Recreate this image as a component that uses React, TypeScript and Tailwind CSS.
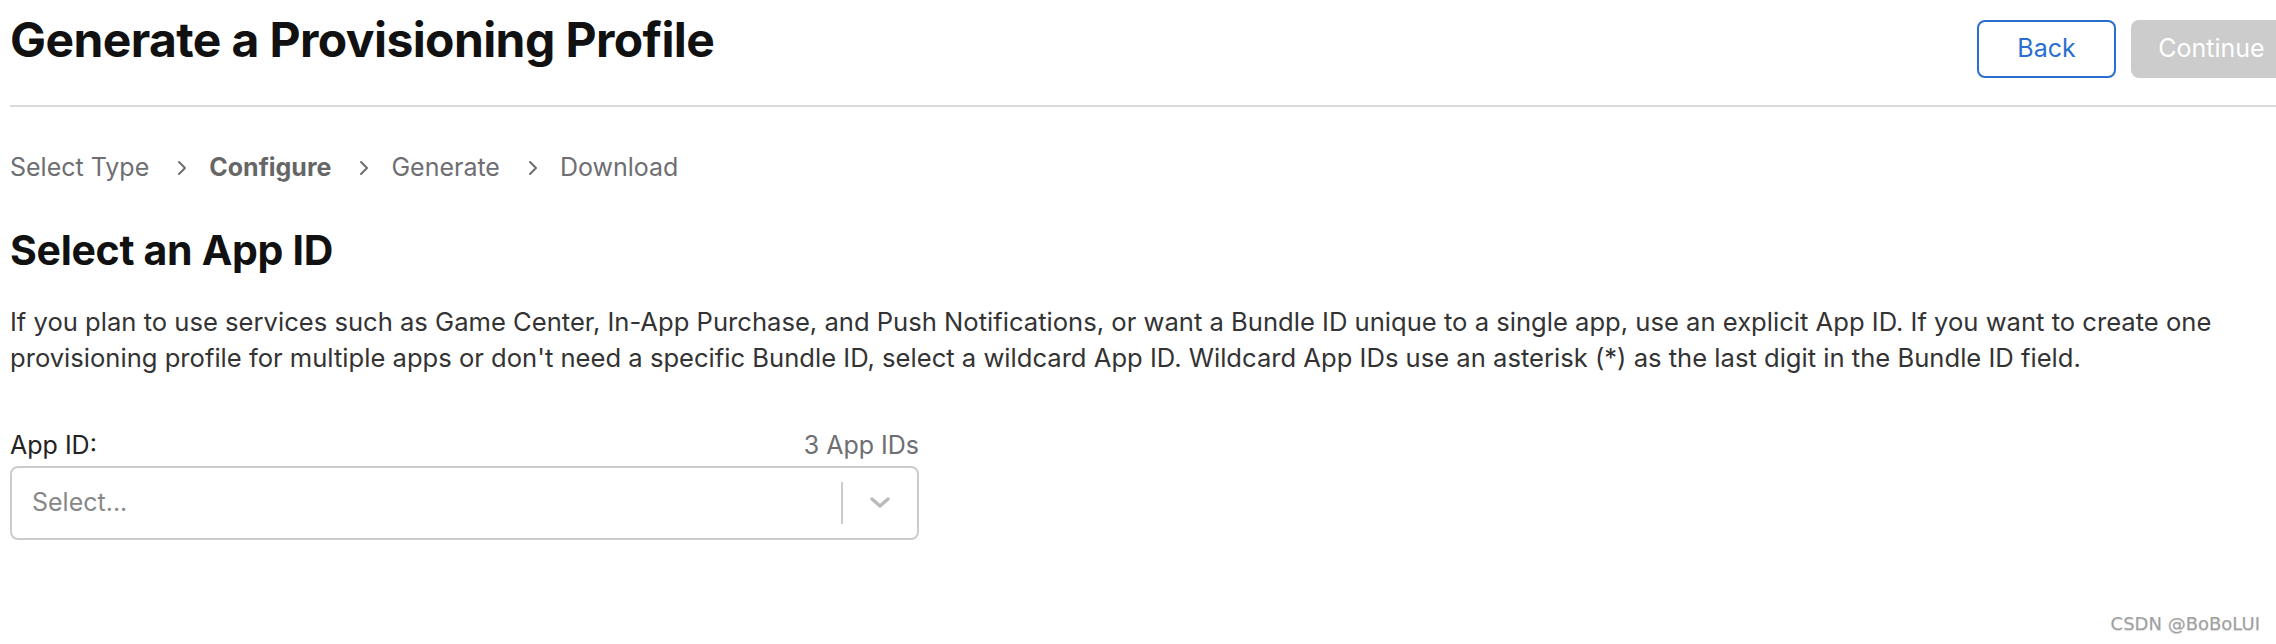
import React from 'react';

function Chevron() {
  return (
    <svg width="10" height="16" viewBox="0 0 10 16" className="ml-[28px] mr-[22px] shrink-0">
      <path d="M2 2 L8 8 L2 14" fill="none" stroke="#6e6e73" strokeWidth="2" strokeLinecap="round" strokeLinejoin="round" />
    </svg>
  );
}

function App() {
  const steps = ['Select Type', 'Configure', 'Generate', 'Download'];

  return (
    <div className="relative w-[2276px] h-[644px] overflow-hidden bg-white font-['Inter',sans-serif]">
      <div className="w-[2282px] ml-[10px]">
        {/* Header */}
        <div className="flex justify-between items-start h-[107px] border-b-2 border-[#d9d9d9]">
          <h1 className="mt-[12px] text-[48px] leading-[56px] font-bold text-[#111111] tracking-[-0.6px]">
            Generate a Provisioning Profile
          </h1>
          <div className="flex gap-[15px] mt-[20px]">
            <button className="w-[139px] h-[58px] rounded-[8px] border-2 border-[#2a6ecf] text-[#2a6ecf] text-[25px]">
              Back
            </button>
            <button className="w-[161px] h-[58px] rounded-[8px] bg-[#cccccc] text-white text-[25px]">
              Continue
            </button>
          </div>
        </div>

        {/* Steps */}
        <div className="flex items-center h-[40px] mt-[41px] text-[25px] text-[#6e6e73]">
          {steps.map((s, i) => (
            <React.Fragment key={s}>
              {i > 0 && <Chevron />}
              <span className={i === 1 ? 'font-bold text-[#666666]' : ''}>{s}</span>
            </React.Fragment>
          ))}
        </div>

        {/* Section */}
        <h2 className="mt-[38px] text-[41px] leading-[48px] font-bold text-[#111111] tracking-[-0.3px]">Select an App ID</h2>
        <p className="mt-[30px] text-[25.6px] leading-[36px] text-[#333333] whitespace-nowrap">
          If you plan to use services such as Game Center, In-App Purchase, and Push Notifications, or want a Bundle ID unique to a single app, use an explicit App ID. If you want to create one
          <br />
          provisioning profile for multiple apps or don't need a specific Bundle ID, select a wildcard App ID. Wildcard App IDs use an asterisk (*) as the last digit in the Bundle ID field.
        </p>

        {/* App ID select */}
        <div className="w-[909px] mt-[54px]">
          <div className="flex justify-between items-center h-[32px] text-[25px]">
            <span className="text-[#222222]">App ID:</span>
            <span className="text-[#6e6e73]">3 App IDs</span>
          </div>
          <div className="mt-[4px] h-[74px] rounded-[8px] border-2 border-[#cccccc] flex items-center">
            <span className="flex-1 pl-[20px] text-[25px] text-[#888888]">Select...</span>
            <div className="w-[2px] h-[42px] bg-[#cccccc]" />
            <div className="w-[74px] flex justify-center">
              <svg width="22" height="14" viewBox="0 0 22 14">
                <path d="M3 3 L11 10 L19 3" fill="none" stroke="#bbbbbb" strokeWidth="3.5" strokeLinecap="round" strokeLinejoin="round" />
              </svg>
            </div>
          </div>
        </div>
      </div>

      {/* Watermark */}
      <div className="absolute right-[16px] bottom-[7px] text-[18px] text-[#a0a0a0] font-['DejaVu_Sans',sans-serif] [text-shadow:0_1px_1px_rgba(0,0,0,0.15)]">
        CSDN @BoBoLUI
      </div>
    </div>
  );
}

export default App;
